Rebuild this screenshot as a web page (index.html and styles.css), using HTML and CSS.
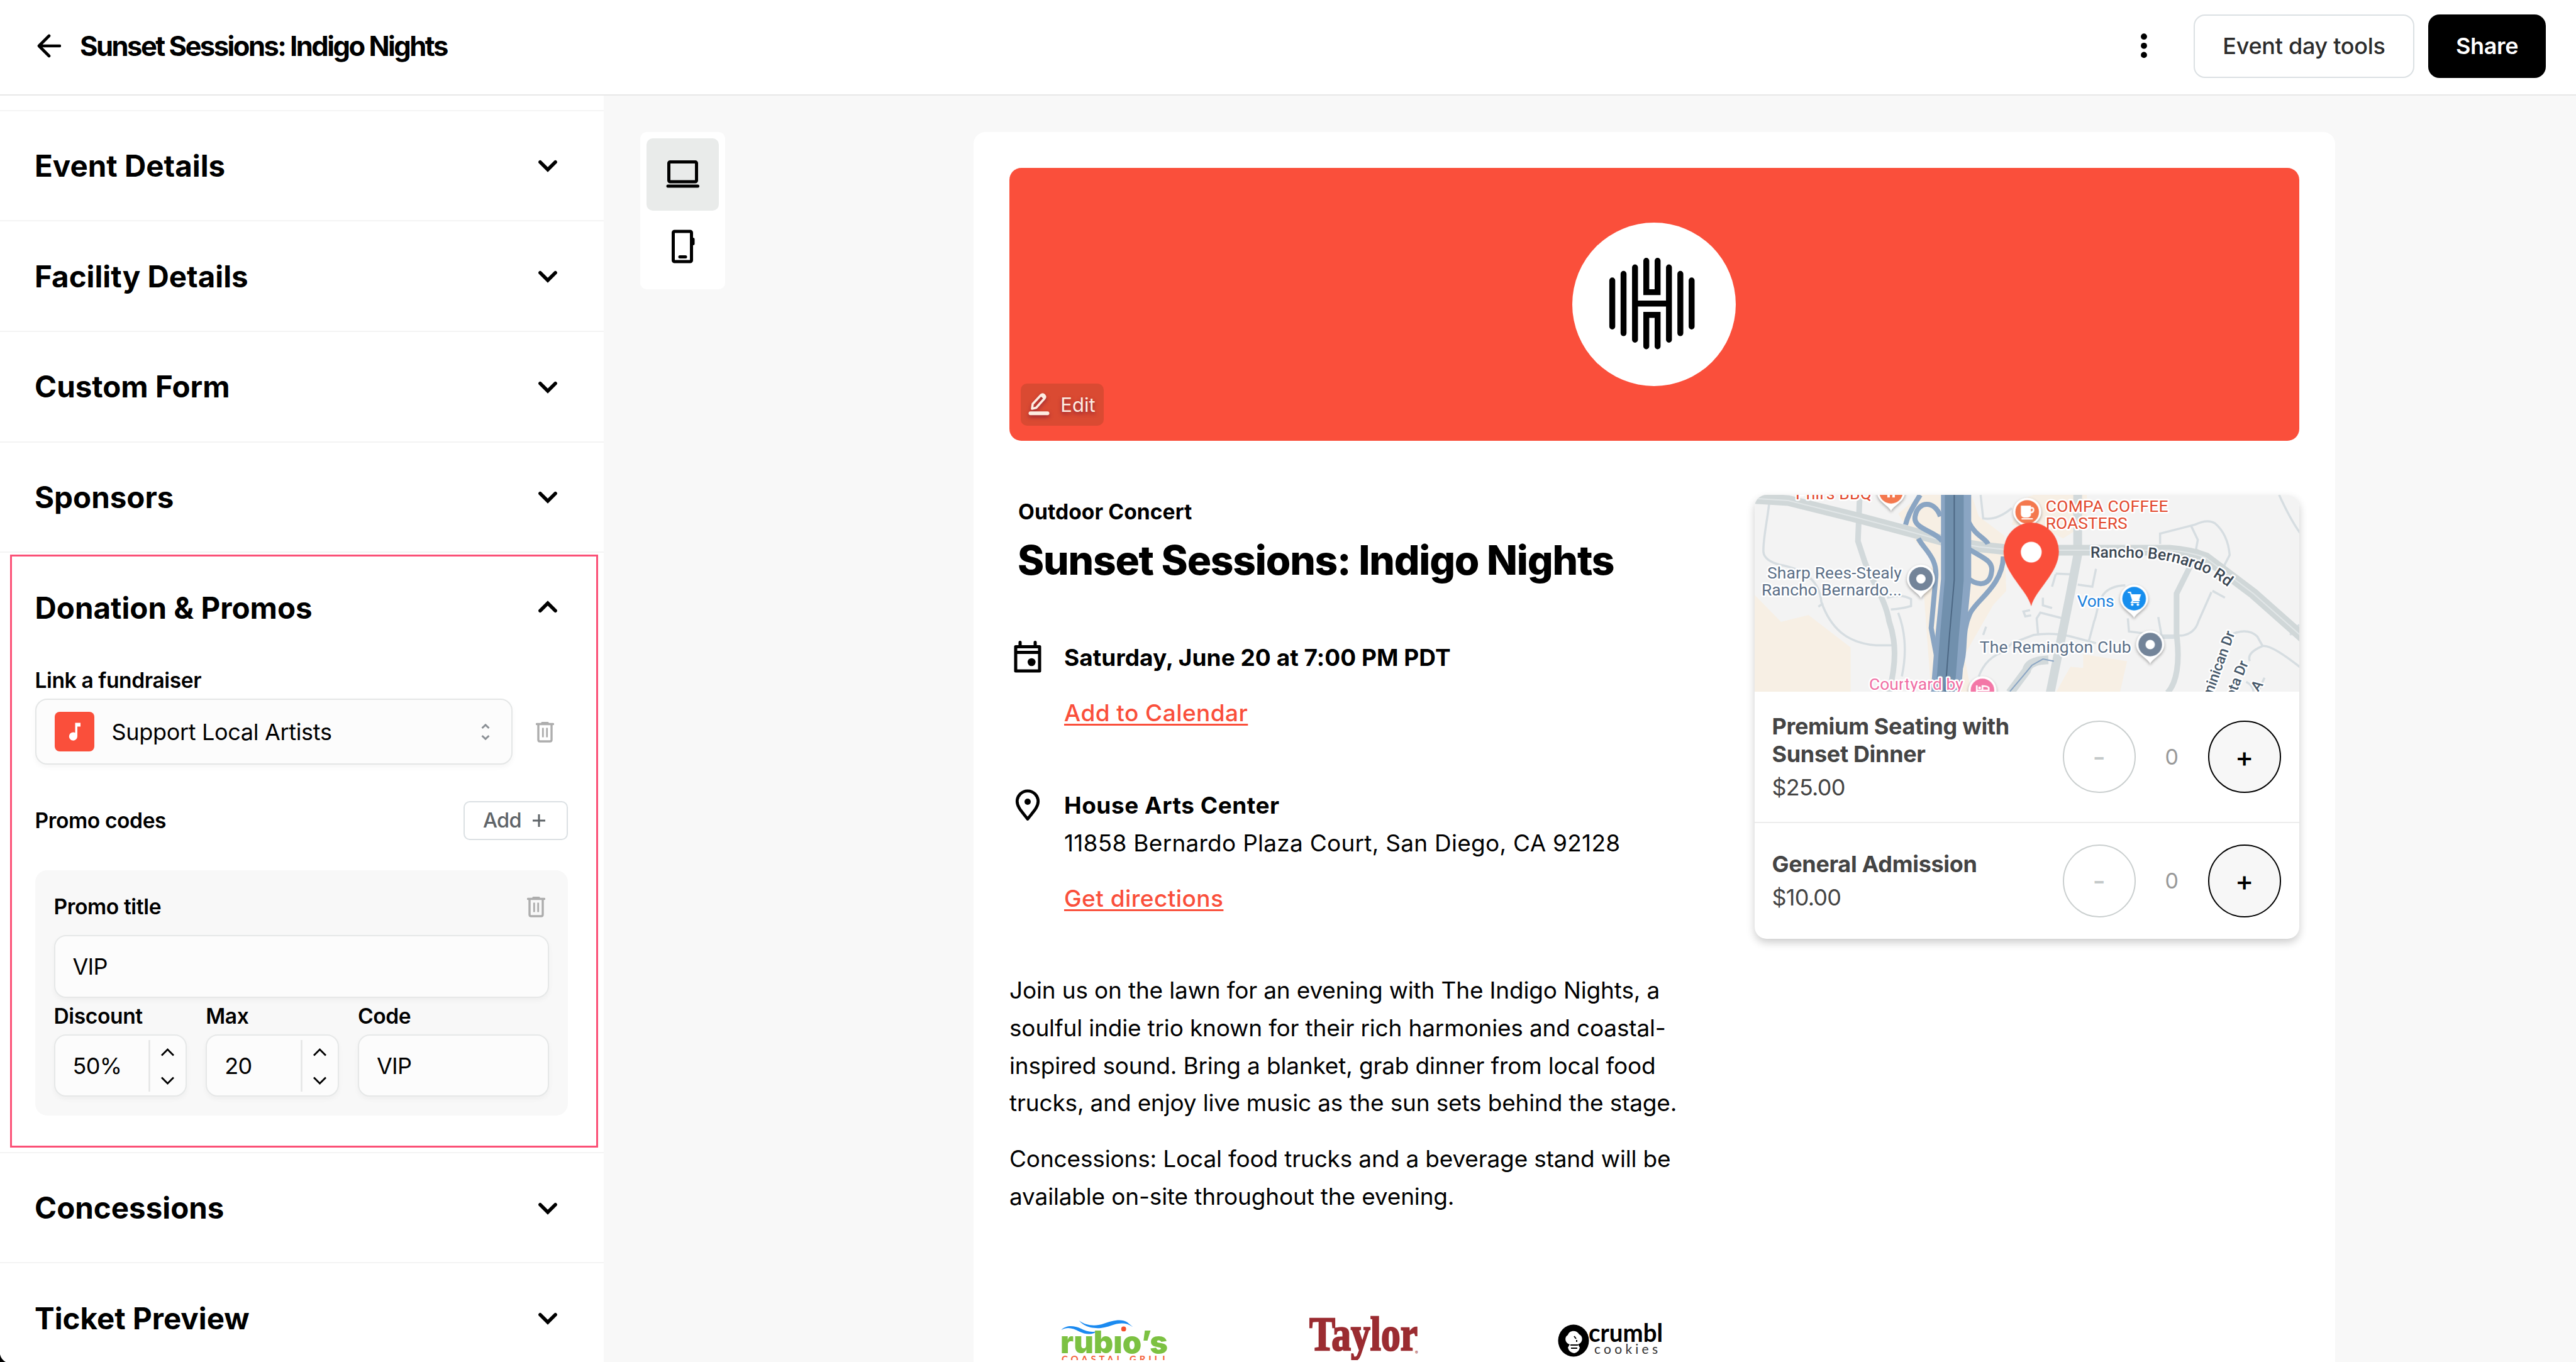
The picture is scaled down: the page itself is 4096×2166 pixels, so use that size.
FILE: index.html
```html
<!DOCTYPE html>
<html lang="en">
<head>
    <meta charset="UTF-8">
    <meta name="viewport" content="width=device-width, initial-scale=1.0">
    <title>Sunset Sessions: Indigo Nights</title>
    <link rel="stylesheet" href="styles.css">
</head>
<body>
    <!-- Shared icons -->
    <svg class="icon-defs" width="0" height="0">
        <symbol id="chevron" viewBox="0 0 24 24">
            <path d="M7 9.8l5 5 5-5" fill="none" stroke="currentColor" stroke-width="2.3" stroke-linecap="round" stroke-linejoin="miter"/>
        </symbol>
        <symbol id="trash" viewBox="0 0 29 34">
            <path d="M1.5 4.5h26M10 2.6h9" fill="none" stroke="currentColor" stroke-width="3.4" stroke-linecap="round"/>
            <path d="M4 5v24.5q0 2.5 2.5 2.5h16q2.5 0 2.5-2.5V5" fill="none" stroke="currentColor" stroke-width="3.4"/>
            <path d="M11.3 10.5v15M17.7 10.5v15" fill="none" stroke="currentColor" stroke-width="2.8"/>
        </symbol>
        <symbol id="place-pin" viewBox="-26 -26 52 66" overflow="visible">
            <path d="M0 31C-3 22-22.4 16-22.4 0a22.4 22.4 0 0 1 44.8 0C22.4 16 3 22 0 31z" fill="#fff"/>
            <circle r="18.8" fill="currentColor"/>
        </symbol>
    </svg>

    <header class="topbar">
        <svg class="back-icon" viewBox="0 0 38 38">
            <path d="M36 19H3M19 3L3 19l16 16" fill="none" stroke="#000" stroke-width="4.6" stroke-linecap="round" stroke-linejoin="round"/>
        </svg>
        <h1 class="topbar-title">Sunset Sessions: Indigo Nights</h1>
        <svg class="more-icon" viewBox="0 0 10 40">
            <circle cx="5" cy="5.2" r="4.9"/><circle cx="5" cy="19.8" r="4.9"/><circle cx="5" cy="34.4" r="4.9"/>
        </svg>
        <button class="btn tools-btn">Event day tools</button>
        <button class="btn share-btn">Share</button>
    </header>

    <div class="page">
        <aside class="sidebar">
            <div class="section-stub"></div>
            <div class="section">
                <h2 class="section-title">Event Details</h2>
                <svg class="chevron"><use href="#chevron"/></svg>
            </div>
            <div class="section">
                <h2 class="section-title">Facility Details</h2>
                <svg class="chevron"><use href="#chevron"/></svg>
            </div>
            <div class="section">
                <h2 class="section-title">Custom Form</h2>
                <svg class="chevron"><use href="#chevron"/></svg>
            </div>
            <div class="section">
                <h2 class="section-title">Sponsors</h2>
                <svg class="chevron"><use href="#chevron"/></svg>
            </div>

            <div class="section-open">
                <div class="highlight"></div>
                <div class="section-head">
                    <h2 class="section-title">Donation &amp; Promos</h2>
                    <svg class="chevron up"><use href="#chevron"/></svg>
                </div>

                <label class="label">Link a fundraiser</label>
                <div class="fundraiser-row">
                    <div class="select">
                        <svg class="fundraiser-icon" viewBox="0 0 63 63">
                            <rect width="63" height="63" rx="8" fill="#fa4f3b"/>
                            <path d="M32.5 17.5h8.5v6h-5V39a6.6 6.6 0 1 1-3.5-5.8z" fill="#fff"/>
                        </svg>
                        <span class="select-text">Support Local Artists</span>
                        <svg class="select-arrows" viewBox="0 0 14 26">
                            <path d="M1.5 7L7 1.8 12.5 7M1.5 19L7 24.2 12.5 19" fill="none" stroke="#8c9196" stroke-width="3"/>
                        </svg>
                    </div>
                    <svg class="trash"><use href="#trash"/></svg>
                </div>

                <div class="promo-head">
                    <span class="label">Promo codes</span>
                    <button class="add-btn">Add
                        <svg class="plus" viewBox="0 0 22 22"><path d="M11 1v20M1 11h20" stroke="#5f6468" stroke-width="3"/></svg>
                    </button>
                </div>

                <div class="promo-card">
                    <div class="promo-title-row">
                        <span class="label">Promo title</span>
                        <svg class="trash"><use href="#trash"/></svg>
                    </div>
                    <div class="input">VIP</div>
                    <div class="promo-fields">
                        <div class="field">
                            <label class="label">Discount</label>
                            <div class="input">50%
                                <svg class="stepper" viewBox="0 0 60 96"><path d="M2.5 7v82" stroke="#e4e6e6" stroke-width="2.5"/><path d="M22 31.5l9.5-9.5 9.5 9.5M22 66.5l9.5 9.5 9.5-9.5" fill="none" stroke="#000" stroke-width="2.8"/></svg>
                            </div>
                        </div>
                        <div class="field">
                            <label class="label">Max</label>
                            <div class="input">20
                                <svg class="stepper" viewBox="0 0 60 96"><path d="M2.5 7v82" stroke="#e4e6e6" stroke-width="2.5"/><path d="M22 31.5l9.5-9.5 9.5 9.5M22 66.5l9.5 9.5 9.5-9.5" fill="none" stroke="#000" stroke-width="2.8"/></svg>
                            </div>
                        </div>
                        <div class="field code-field">
                            <label class="label">Code</label>
                            <div class="input">VIP</div>
                        </div>
                    </div>
                </div>
            </div>

            <div class="section">
                <h2 class="section-title">Concessions</h2>
                <svg class="chevron"><use href="#chevron"/></svg>
            </div>
            <div class="section">
                <h2 class="section-title">Ticket Preview</h2>
                <svg class="chevron"><use href="#chevron"/></svg>
            </div>
        </aside>

        <main class="canvas">
            <div class="device-toggle">
                <div class="device active">
                    <svg class="device-icon" viewBox="0 0 58 58">
                        <rect x="7.5" y="9.5" width="44" height="31.5" rx="2" fill="none" stroke="#000" stroke-width="5"/>
                        <path d="M6 48h47.5" stroke="#000" stroke-width="5" stroke-linecap="round"/>
                    </svg>
                </div>
                <div class="device">
                    <svg class="device-icon" viewBox="0 0 58 58">
                        <rect x="14.5" y="5" width="29" height="48" rx="2" fill="none" stroke="#000" stroke-width="5"/>
                        <path d="M25 45.5h9" stroke="#000" stroke-width="5" stroke-linecap="round"/>
                        <rect x="43.5" y="15" width="5" height="12" rx="2.5"/>
                    </svg>
                </div>
            </div>

            <div class="event-card">
                <div class="banner">
                    <svg class="logo" viewBox="0 0 484 484">
                        <circle cx="242" cy="242" r="242" fill="#fff"/>
                        <g fill="none" stroke="#000" stroke-width="17.5" stroke-linecap="round">
                            <path d="M118.4 171.3v136.4M151.8 151.8v175.5M185.7 132.7v214M286.2 132.7v214M319.9 151.8v175.5M353.3 171.3v136.4"/>
                            <path d="M219.1 113.2v92.8h33.5v-92.8M219.1 366.2v-93h33.5v93M190 239.7h92"/>
                        </g>
                    </svg>
                    <button class="edit-btn">
                        <svg class="edit-icon" viewBox="0 0 34 38">
                            <path d="M6 26l1-7.5L20 4.500q3-2.500 5.500 0t0 5.500L12.500 24.500z" fill="none" stroke="#fdece2" stroke-width="3.6" stroke-linejoin="round"/>
                            <path d="M19 5.5l6.5 6 3-4-5-5z" fill="#fdece2"/>
                            <path d="M3.5 33.3h27" stroke="#fdece2" stroke-width="6" stroke-linecap="round"/>
                        </svg>
                        Edit
                    </button>
                </div>

                <div class="event-body">
                    <div class="event-info">
                        <p class="event-type">Outdoor Concert</p>
                        <h2 class="event-title">Sunset Sessions: Indigo Nights</h2>

                        <div class="info-row">
                            <svg class="info-icon" viewBox="0 0 58 58">
                                <path d="M10 12.5h38v38.5H10zM10 21.5h38" fill="none" stroke="#000" stroke-width="5" stroke-linejoin="round"/>
                                <path d="M17 5.5v6M41 5.5v6" stroke="#000" stroke-width="5" stroke-linecap="round"/>
                                <circle cx="35.3" cy="37" r="6.3"/>
                            </svg>
                            <div class="info-text">
                                <strong>Saturday, June 20 at 7:00 PM PDT</strong>
                                <a href="#">Add to Calendar</a>
                            </div>
                        </div>

                        <div class="info-row location">
                            <svg class="info-icon" viewBox="0 0 58 58">
                                <path d="M29 51.5C22 42 12.3 33.5 12.3 23.5a16.7 16.7 0 0 1 33.4 0C45.7 33.5 36 42 29 51.5z" fill="none" stroke="#000" stroke-width="4.8" stroke-linejoin="round"/>
                                <circle cx="29" cy="24" r="5"/>
                            </svg>
                            <div class="info-text">
                                <strong>House Arts Center</strong>
                                <span class="address">11858 Bernardo Plaza Court, San Diego, CA 92128</span>
                                <a href="#">Get directions</a>
                            </div>
                        </div>

                        <div class="description">
                            <p>Join us on the lawn for an evening with The Indigo Nights, a<br>
                            soulful indie trio known for their rich harmonies and coastal-<br>
                            inspired sound. Bring a blanket, grab dinner from local food<br>
                            trucks, and enjoy live music as the sun sets behind the stage.</p>
                            <p>Concessions: Local food trucks and a beverage stand will be<br>
                            available on-site throughout the evening.</p>
                        </div>

                        <div class="sponsors">
                            <svg class="sponsor" viewBox="0 0 337 80">
                                <g fill="#1b8af0">
                                    <path d="M82.5 32C90 24 103 25 113 29.5 122 34 131 37 139.8 33.5 133 41 120 39 111 34.5 101 29 92 26.5 82.5 32z"/>
                                    <path d="M110.5 17C121 25 136 27 150 22 162 17.5 178 13.5 187 19.5L196.5 27.5C186 20 176 20.5 165 24 148 30 140 30 129 28 120 25.5 115 22 110.5 17z"/>
                                </g>
                                <text class="rubios" x="81" y="69" textLength="171" lengthAdjust="spacingAndGlyphs">rubıo’s</text>
                                <circle cx="181.7" cy="30.4" r="3.9" fill="#f4512c"/>
                                <text class="rubios-sub" x="83" y="84" textLength="168">COASTAL GRILL</text>
                            </svg>
                            <svg class="sponsor" viewBox="0 0 337 80">
                                <text class="taylor" x="82" y="64" textLength="172" lengthAdjust="spacingAndGlyphs">Taylor</text>
                                <text class="reg" x="250" y="71">®</text>
                            </svg>
                            <svg class="sponsor" viewBox="0 0 337 80">
                                <ellipse cx="107" cy="49" rx="24.5" ry="25.5"/>
                                <path d="M101 55c-8-2-9-12-3-15 3-8 14-8 18-1 7 3 6 14-2 16l3 5q-2 8-9 9-8-1-10-9z" fill="#fff"/>
                                <path d="M102 56h12M103 61h10M108 42l3 4M112 48v3" stroke="#000" stroke-width="2" fill="none"/>
                                <text class="crumbl" x="131" y="51" textLength="118" lengthAdjust="spacingAndGlyphs">crumbl</text>
                                <text class="crumbl-sub" x="140" y="70" textLength="101">cookies</text>
                            </svg>
                        </div>
                    </div>

                    <div class="ticket-card">
                        <svg class="map" viewBox="0 0 867 313">
                            <rect width="867" height="313" fill="#f3f3f3"/>
                            <!-- road geometry keeps its own grid, strokes stay in px -->
                            <g class="roads" transform="scale(.5827 .2193) translate(-38 -84)">
                                <path fill="#f7efe4" d="M38 810L110 1005 185 955 300 1190V1520H38zM490 84H630L650 240 720 380 725 780 690 880 610 1250 630 1520H520L500 800 525 560 480 430 430 220zM800 84H945V290L880 400 830 330 740 300 760 120zM935 1240L1055 1290 1035 1520H860L900 1330 935 1340z"/>
                                <g class="minor">
                                    <path d="M80 84C75 250 60 400 62 500Q65 560 105 590C170 620 215 700 220 860 245 1050 290 1160 370 1175H420M225 870L212 895M400 830Q440 800 465 840V890Q440 910 410 915M430 940Q460 1150 440 1400M655 84L662 255Q700 270 740 180M1470 84C1490 200 1510 300 1530 370M1145 440V365L1240 300Q1275 255 1295 290 1330 370 1335 520L1300 700M1230 310L1248 410 1243 480M860 655L900 660M970 620L960 750 920 735M860 660L850 750M825 830V885L850 905M790 920L772 930 777 965 793 958M880 980L818 938 808 980 812 1100M1050 740C970 750 980 900 965 1000L950 1150M1057 980L1060 1075 1150 1105H1205Q1240 1090 1250 1000L1285 790M1288 780L1322 830M1140 970L1150 1120H1190M670 1040L662 1100M650 1400Q670 1260 720 1220L740 1160 800 1100Q850 1080 900 1110L970 1160M1345 1090Q1385 1050 1410 1110L1425 1180Q1450 1170 1530 1340M1425 1180Q1380 1230 1390 1290M1380 1440Q1400 1470 1400 1510M1430 1410L1415 1500M1525 1025L1500 1100"/>
                                </g>
                                <path class="medium" d="M325 84L320 420 335 540C350 680 395 830 405 1000 425 1150 425 1300 405 1520M1250 480L1190 800V1100C1200 1300 1190 1450 1165 1520"/>
                                <path class="medium wide" d="M920 84V520L900 800 845 1520"/>
                                <path class="medium wide" d="M840 1280Q785 1285 780 1360L735 1520"/>
                                <path class="main-road" d="M38 110L130 125 320 250 560 420 650 460 740 485H1170Q1225 495 1270 540L1400 800 1540 1130"/>
                                <path class="main-road-line" d="M38 110L130 125 320 250 560 420 650 460 740 485H1170Q1225 495 1270 540L1400 800 1540 1130"/>
                                <path class="ramp" d="M490 84C460 210 455 250 450 300M545 240C530 120 485 130 477 230 465 330 530 340 550 420M485 400C500 480 540 540 532 700L520 1050 535 1260 530 1520M622 280C640 380 670 400 675 440M618 470C660 540 690 560 685 640 680 760 640 740 617 680M717 530C715 750 640 850 625 950 600 1100 620 1200 595 1380"/>
                                <path class="freeway-edge" d="M588 84V700L573 1100 560 1520"/>
                                <path class="freeway" d="M583 84V700L570 1100 558 1520"/>
                                <path class="freeway-line" d="M583 84V700L570 1100 558 1520"/>
                                <path class="creek" d="M855 1290L825 1275 795 1320 770 1400 735 1510"/>
                            </g>

                            <g class="place coral">
                                <text x="65" y="7" textLength="121">Phil's BBQ</text>
                                <text x="463" y="27" textLength="195">COMPA COFFEE</text>
                                <text x="463" y="54" textLength="130">ROASTERS</text>
                            </g>
                            <g class="place slate">
                                <text x="20" y="133" textLength="214">Sharp Rees-Stealy</text>
                                <text x="11" y="160" textLength="223">Rancho Bernardo...</text>
                                <text x="358" y="251" textLength="241">The Remington Club</text>
                            </g>
                            <text class="place blue" x="513" y="178" textLength="59">Vons</text>
                            <text class="place pink" x="182" y="310" textLength="150">Courtyard by</text>

                            <path id="rb-road" d="M534 100C600 99 645 99 684 112 712 121 728 126 762 154" fill="none"/>
                            <text class="place road-name"><textPath href="#rb-road" textLength="229">Rancho Bernardo Rd</textPath></text>
                            <g class="place street-name">
                                <text transform="translate(722 336) rotate(-70)">ominican Dr</text>
                                <text transform="translate(758 336) rotate(-68)">cota Dr</text>
                                <text transform="translate(801 314) rotate(-55)">A</text>
                            </g>

                            <g class="pins">
                                <g transform="translate(217 -5)" color="#f4784e"><use href="#place-pin" x="-26" y="-26" width="52" height="66"/><path d="M-4 0v9M4 0v9" stroke="#fff" stroke-width="4"/></g>
                                <g transform="translate(433.5 27)" color="#f4784e"><use href="#place-pin" x="-26" y="-26" width="52" height="66"/><path d="M-9-9H5V5Q4 8 0 8H-5Q-9 7-9 3zM-9 11H9" fill="#fff" stroke="#fff" stroke-width="2"/><path d="M5-6q6-2 5 4-1 3-5 3" fill="none" stroke="#fff" stroke-width="2.5"/></g>
                                <g transform="translate(264.5 133.5)" color="#738499"><use href="#place-pin" x="-26" y="-26" width="52" height="66"/><circle r="7.5" fill="#fff"/></g>
                                <g transform="translate(603.7 165)" color="#168eee"><use href="#place-pin" x="-26" y="-26" width="52" height="66"/><path d="M-10-10h4L-2 3H9M-2 3L-4 6H8" fill="none" stroke="#fff" stroke-width="2.2"/><path d="M-5-7H11L8 2H-2z" fill="#fff"/><circle cx="-3" cy="9.5" r="2" fill="#fff"/><circle cx="6" cy="9.5" r="2" fill="#fff"/></g>
                                <g transform="translate(629.3 238)" color="#738499"><use href="#place-pin" x="-26" y="-26" width="52" height="66"/><circle r="7.5" fill="#fff"/></g>
                                <g transform="translate(362.4 311)" color="#f377a7"><use href="#place-pin" x="-26" y="-26" width="52" height="66"/><path d="M-9-8V3M-9 0H10V-4Q8-7 0-7V0" fill="none" stroke="#fff" stroke-width="2.6"/><circle cx="-4.5" cy="-4" r="2.2" fill="#fff"/></g>
                            </g>
                            <path d="M440 177C434 152 396 124 396 90a44 46 0 0 1 88 0C484 124 446 152 440 177z" fill="#fa4f3b"/>
                            <circle cx="440" cy="91" r="16.6" fill="#fff"/>
                        </svg>

                        <div class="ticket premium">
                            <div class="ticket-info">
                                <h3>Premium Seating with<br>Sunset Dinner</h3>
                                <p>$25.00</p>
                            </div>
                            <button class="qty-btn minus">-</button>
                            <span class="qty">0</span>
                            <button class="qty-btn add">+</button>
                        </div>
                        <div class="ticket general">
                            <div class="ticket-info">
                                <h3>General Admission</h3>
                                <p>$10.00</p>
                            </div>
                            <button class="qty-btn minus">-</button>
                            <span class="qty">0</span>
                            <button class="qty-btn add">+</button>
                        </div>
                    </div>
                </div>
            </div>
        </main>
    </div>

    <svg class="window-corner" viewBox="0 0 9 12"><path d="M0 0Q2 8 9 12H0z"/></svg>
</body>
</html>
```
FILE: styles.css
```css
* {
    box-sizing: border-box;
}

body {
    margin: 0;
    width: 4096px;
    height: 2166px;
    overflow: hidden;
    background: #f8f8f8;
    color: #000;
    font-family: 'Inter', 'Liberation Sans', sans-serif;
    font-size: 37px;
    display: flex;
    flex-direction: column;
    position: relative;
}

h1, h2, h3, p {
    margin: 0;
}

button {
    font-family: inherit;
    padding: 0;
    cursor: pointer;
}

svg {
    display: block;
    flex-shrink: 0;
}

.icon-defs {
    position: absolute;
}

/* Top bar */
.topbar {
    height: 151.5px;
    flex-shrink: 0;
    background: #fff;
    border-bottom: 2px solid #e8e8e8;
    display: flex;
    align-items: center;
    padding: 0 48px 3px 59px;
}

.back-icon {
    width: 38px;
    height: 38px;
    margin-right: 30px;
}

.topbar-title {
    font-size: 43.5px;
    font-weight: 650;
    letter-spacing: -0.058em;
    flex: 1;
}

.more-icon {
    width: 10px;
    height: 40px;
    margin-right: 74px;
}

.btn {
    height: 101px;
    border-radius: 18px;
    font-size: 36px;
}

.tools-btn {
    width: 351px;
    margin-right: 22px;
    background: #fff;
    border: 2px solid #dbe0e3;
    color: #2c2c2c;
    font-weight: 550;
    letter-spacing: -0.008em;
}

.share-btn {
    width: 187px;
    background: #000;
    border: none;
    color: #fff;
    font-weight: 600;
    letter-spacing: -0.01em;
}

.page {
    display: flex;
    flex: 1;
    min-height: 0;
}

/* Sidebar */
.sidebar {
    width: 960px;
    flex-shrink: 0;
    background: #fff;
    overflow: hidden;
}

.section-stub {
    height: 25px;
    border-bottom: 2px solid #f4f4f4;
}

.section {
    height: 175.7px;
    border-bottom: 2px solid #f4f4f4;
    display: flex;
    align-items: center;
    justify-content: space-between;
    padding: 0 60px 0 55px;
}

.section-title {
    font-size: 47.5px;
    font-weight: 700;
    letter-spacing: 0;
}

.chevron {
    width: 58px;
    height: 58px;
}

.chevron.up {
    transform: rotate(180deg);
}

.section-open {
    position: relative;
    height: 954.5px;
    border-bottom: 2px solid #f4f4f4;
    padding: 0 57.5px 0 55.5px;
}

.highlight {
    position: absolute;
    left: 16px;
    right: 9.5px;
    top: 3px;
    bottom: 7px;
    border: 3px solid #fb5076;
}

.section-head {
    height: 174px;
    display: flex;
    align-items: center;
    justify-content: space-between;
    padding-right: 2.5px;
}

.label {
    display: block;
    font-size: 33.6px;
    font-weight: 600;
    line-height: 58px;
    letter-spacing: -0.012em;
}

.fundraiser-row {
    display: flex;
    align-items: center;
}

.select {
    width: 759px;
    height: 104.5px;
    background: #fcfcfc;
    border: 2px solid #e4e6e6;
    border-radius: 19px;
    box-shadow: 0 4px 8px rgba(0, 0, 0, 0.04);
    display: flex;
    align-items: center;
    padding: 0 34px 0 29px;
}

.fundraiser-icon {
    width: 63px;
    height: 63px;
    margin-right: 28px;
}

.select-text {
    flex: 1;
    font-size: 36px;
    letter-spacing: -0.009em;
}

.select-arrows {
    width: 14px;
    height: 26px;
}

.trash {
    width: 29px;
    height: 34px;
    color: #adadad;
}

.fundraiser-row .trash {
    margin-left: 37px;
}

.promo-head {
    margin-top: 58px;
    height: 62px;
    display: flex;
    align-items: center;
    justify-content: space-between;
}

.add-btn {
    width: 166px;
    height: 62px;
    background: #fff;
    border: 2px solid #dbe0e3;
    border-radius: 10px;
    color: #5f6468;
    font-size: 32.5px;
    font-weight: 500;
    letter-spacing: -0.02em;
    display: flex;
    align-items: center;
    justify-content: center;
    gap: 17px;
    padding-right: 3px;
}

.plus {
    width: 22px;
    height: 22px;
}

.promo-card {
    margin-top: 48px;
    height: 390px;
    background: #f8f8f8;
    border-radius: 19px;
    padding: 29px 30px;
}

.promo-title-row {
    height: 57.5px;
    margin-bottom: 17px;
    padding-right: 6px;
    display: flex;
    align-items: center;
    justify-content: space-between;
}

.input {
    height: 99.5px;
    background: #fcfcfc;
    border: 2px solid #e6e8e8;
    border-radius: 19px;
    box-shadow: 0 4px 8px rgba(0, 0, 0, 0.04);
    font-size: 36px;
    letter-spacing: -0.02em;
    padding-left: 28px;
    display: flex;
    align-items: center;
    justify-content: space-between;
}

.promo-fields {
    display: flex;
    gap: 30px;
}

.field {
    width: 211.7px;
}

.code-field {
    flex: 1;
}

.stepper {
    width: 60px;
    height: 96px;
}

/* Preview canvas */
.canvas {
    flex: 1;
    display: flex;
    align-items: flex-start;
    padding: 58px 0 0 58px;
}

.device-toggle {
    width: 134.5px;
    padding: 10px;
    background: #fff;
    border-radius: 10px;
    margin-right: 395px;
}

.device {
    height: 115px;
    border-radius: 10px;
    display: flex;
    align-items: center;
    justify-content: center;
}

.device.active {
    background: #e9ebea;
}

.device-icon {
    width: 58px;
    height: 58px;
}

.event-card {
    width: 2165.5px;
    align-self: stretch;
    background: #fff;
    border-radius: 19px 19px 0 0;
    padding: 57.5px 57.5px 0;
}

.banner {
    position: relative;
    height: 433.5px;
    background: #fa4f3b;
    border-radius: 19px;
    display: flex;
    align-items: center;
    justify-content: center;
}

.logo {
    width: 260px;
    height: 260px;
}

.edit-btn {
    position: absolute;
    left: 17.5px;
    bottom: 24px;
    width: 132px;
    height: 67px;
    border: none;
    border-radius: 10px;
    background: #da4a32;
    color: #fdece2;
    font-size: 31px;
    text-shadow: 0 3px 6px rgba(120, 20, 50, 0.8);
    display: flex;
    align-items: center;
    justify-content: center;
    gap: 17px;
}

.edit-icon {
    width: 34px;
    height: 38px;
    filter: drop-shadow(0 3px 3px rgba(120, 20, 50, 0.7));
}

.event-body {
    display: flex;
    gap: 57.5px;
    align-items: flex-start;
    margin-top: 86.5px;
}

.event-info {
    width: 1127px;
    padding-top: 3.5px;
}

.event-type {
    padding-left: 14px;
    font-size: 33.6px;
    font-weight: 650;
    line-height: 46px;
    letter-spacing: 0.002em;
}

.event-title {
    padding-left: 13px;
    margin-top: 14px;
    font-size: 64px;
    font-weight: 800;
    line-height: 80px;
    letter-spacing: -0.019em;
}

.info-row {
    display: flex;
    margin-top: 85px;
}

.info-row.location {
    margin-top: 87.5px;
}

.info-icon {
    width: 58px;
    height: 58px;
    margin-right: 29px;
}

.info-text {
    display: flex;
    flex-direction: column;
    align-items: flex-start;
    line-height: 59.5px;
}

.info-text strong {
    font-weight: 650;
    letter-spacing: 0.001em;
}

.location strong {
    letter-spacing: 0.014em;
}

.address {
    letter-spacing: 0.007em;
}

.info-text a {
    margin-top: 29px;
    color: #fa4f3b;
    font-weight: 550;
    letter-spacing: 0.012em;
    text-decoration: underline;
    text-decoration-thickness: 3px;
    text-underline-offset: 4px;
}

.description {
    margin-top: 86.5px;
    line-height: 59.8px;
    letter-spacing: -0.0045em;
}

.description p + p {
    margin-top: 29px;
}

/* Sponsor strip */
.sponsors {
    display: flex;
    gap: 58px;
    margin-top: 150px;
}

.sponsor {
    width: 337px;
    height: 80px;
}

.rubios {
    font-size: 49px;
    font-weight: 900;
    fill: #7cc142;
}

.rubios-sub {
    font-family: 'Lato', sans-serif;
    font-size: 15px;
    font-weight: 700;
    fill: #f4623a;
}

.taylor {
    font-family: 'Liberation Serif', serif;
    font-size: 76px;
    font-weight: 700;
    fill: #9b2c31;
    stroke: #9b2c31;
    stroke-width: 2.5px;
}

.reg {
    font-size: 7px;
    fill: #9b2c31;
}

.crumbl {
    font-family: 'Lato', sans-serif;
    font-size: 40px;
    font-weight: 700;
}

.crumbl-sub {
    font-family: 'Lato', sans-serif;
    font-size: 21px;
    fill: #333;
}

/* Ticket card */
.ticket-card {
    width: 866.5px;
    background: #fff;
    border-radius: 19px;
    overflow: hidden;
    box-shadow: 0 6px 14px rgba(0, 0, 0, 0.2);
}

.map {
    width: 866.5px;
    height: 313px;
}

.roads path {
    vector-effect: non-scaling-stroke;
}

.minor path {
    fill: none;
    stroke: #d6dde1;
    stroke-width: 3.5px;
}

.medium {
    fill: none;
    stroke: #d2d9db;
    stroke-width: 9px;
}

.medium.wide {
    stroke-width: 14px;
}

.main-road {
    fill: none;
    stroke: #d0d7d8;
    stroke-width: 17px;
}

.main-road-line {
    fill: none;
    stroke: #e1e6e7;
    stroke-width: 2px;
}

.ramp {
    fill: none;
    stroke: #8aa5c3;
    stroke-width: 8px;
}

.freeway-edge {
    fill: none;
    stroke: #8aa5c3;
    stroke-width: 48px;
}

.freeway {
    fill: none;
    stroke: #7190ad;
    stroke-width: 30px;
}

.freeway-line {
    fill: none;
    stroke: #4d6884;
    stroke-width: 2px;
}

.creek {
    fill: none;
    stroke: #8aa5c3;
    stroke-width: 2px;
}

.place {
    font-family: 'Roboto', sans-serif;
    font-size: 26.5px;
    stroke: #fff;
    stroke-width: 5px;
    stroke-linejoin: round;
    paint-order: stroke;
}

.coral {
    fill: #e2492e;
}

.slate {
    fill: #5c7088;
}

.blue {
    fill: #1a80dc;
}

.pink {
    fill: #f06ea4;
}

.road-name {
    fill: #3a4653;
    font-size: 25px;
    font-weight: 500;
}

.street-name {
    fill: #46586a;
    font-size: 23px;
    font-weight: 500;
}

.pins {
    filter: drop-shadow(0 2px 2px rgba(0, 0, 0, 0.35));
}

.ticket {
    display: flex;
    align-items: center;
    padding: 0 29px 0 28px;
    color: #444;
    font-size: 36px;
}

.premium {
    height: 209px;
    border-bottom: 2px solid #ededed;
}

.general {
    height: 183.5px;
}

.ticket-info {
    flex: 1;
    padding-top: 6px;
}

.ticket-info h3 {
    font-size: 36px;
    font-weight: 650;
    line-height: 43.3px;
    letter-spacing: -0.009em;
}

.ticket-info p {
    margin-top: 5px;
    line-height: 53px;
    letter-spacing: -0.022em;
}

.qty-btn {
    width: 115.5px;
    height: 115.5px;
    border-radius: 50%;
    font-size: 44px;
    font-weight: 500;
}

.minus {
    background: #fff;
    border: 2.5px solid #cacfcf;
    color: #c4c9c9;
}

.add {
    background: #f7f7f7;
    border: 2.5px solid #000;
    color: #000;
}

.qty {
    width: 115.5px;
    text-align: center;
    font-size: 34px;
    color: #999;
}

.window-corner {
    position: absolute;
    left: 0;
    bottom: 0;
    width: 9px;
    height: 12px;
}
```
